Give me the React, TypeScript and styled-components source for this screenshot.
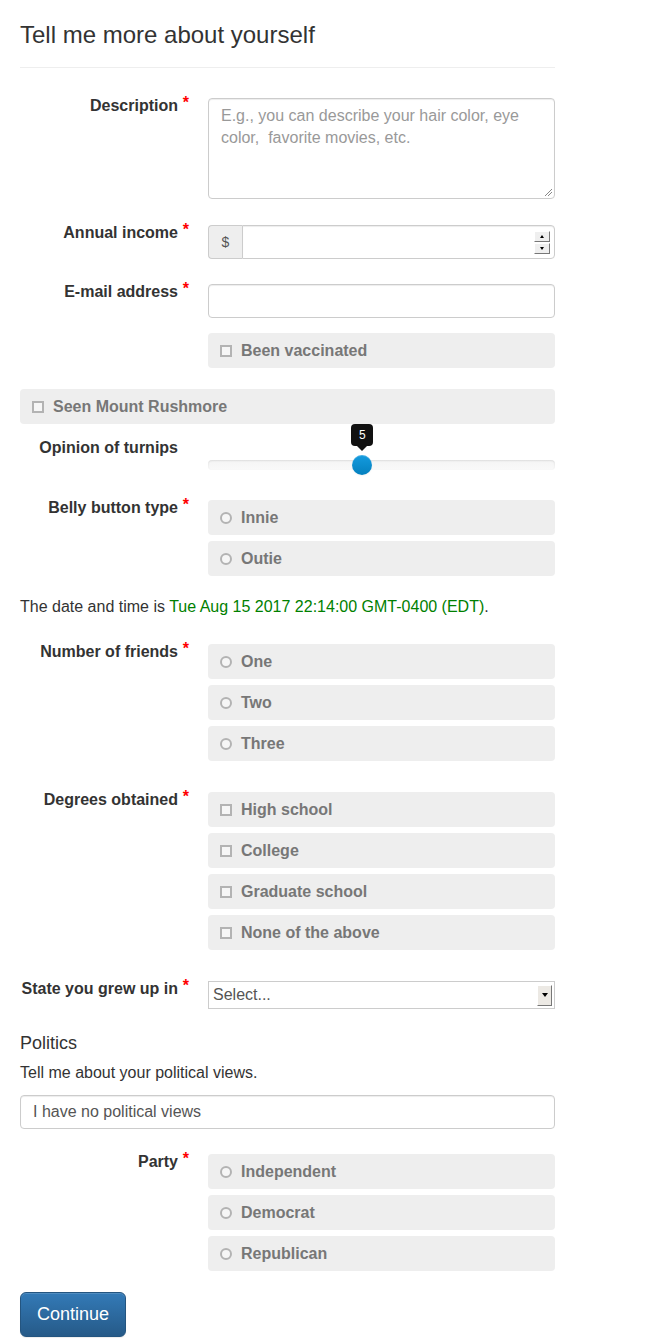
import React from 'react';
import styled, { createGlobalStyle } from 'styled-components';

const GlobalStyle = createGlobalStyle`
  html, body {
    margin: 0;
    padding: 0;
    background: #fff;
  }
  body {
    font-family: "Liberation Sans", Arial, Helvetica, sans-serif;
    font-size: 16px;
    color: #333;
  }
  * {
    box-sizing: border-box;
  }
`;

const Page = styled.div`
  width: 575px;
  padding: 0 20px 4px;
`;

const Title = styled.h1`
  margin: 22px 0 0;
  font-size: 24px;
  font-weight: 400;
  line-height: 26.4px;
  color: #333;
`;

const Rule = styled.hr`
  margin: 19px 0 30px;
  border: 0;
  border-top: 1px solid #eee;
`;

const Row = styled.div<{ $space: number }>`
  display: grid;
  grid-template-columns: 158px 347px;
  column-gap: 30px;
  align-items: start;
  margin-bottom: ${({ $space }) => $space}px;
`;

const Label = styled.label<{ $required?: boolean }>`
  position: relative;
  justify-self: end;
  font-weight: 700;
  font-size: 16px;
  line-height: 16px;
  white-space: nowrap;
  &::after {
    content: ${({ $required }) => ($required ? "'*'" : 'none')};
    position: absolute;
    right: -11px;
    top: -3px;
    color: #f00;
    font-size: 16px;
  }
`;

const SliderLabel = styled(Label)`
  margin-top: 1px;
`;

const TextArea = styled.div`
  height: 101px;
  border: 1px solid #ccc;
  border-radius: 4px;
  padding: 6px 12px;
  line-height: 22px;
  color: #999;
  position: relative;
  box-shadow: inset 0 1px 1px rgba(0, 0, 0, 0.075);
  &::after {
    content: '';
    position: absolute;
    right: 2px;
    bottom: 2px;
    width: 7px;
    height: 7px;
    background: linear-gradient(135deg, transparent 45%, #888 45%, #888 52%, transparent 52%, transparent 70%, #888 70%, #888 77%, transparent 77%);
  }
`;

const InputGroup = styled.div`
  display: flex;
  height: 34px;
`;

const Addon = styled.span`
  width: 34px;
  display: flex;
  align-items: center;
  justify-content: center;
  background: #eee;
  border: 1px solid #ccc;
  border-right: 0;
  border-radius: 4px 0 0 4px;
  color: #555;
  font-size: 14px;
`;

const Field = styled.div<{ $joined?: boolean }>`
  flex: 1;
  display: flex;
  align-items: center;
  height: 34px;
  padding: 0 12px;
  border: 1px solid #ccc;
  border-radius: ${({ $joined }) => ($joined ? '0 4px 4px 0' : '4px')};
  color: #555;
  font-size: 16px;
  box-shadow: inset 0 1px 1px rgba(0, 0, 0, 0.075);
`;

const Spinner = styled.div`
  margin-left: auto;
  margin-right: -8px;
  display: flex;
  flex-direction: column;
  gap: 1px;
`;

const SpinButton = styled.span<{ $down?: boolean }>`
  width: 16px;
  height: 11px;
  display: flex;
  align-items: center;
  justify-content: center;
  background: #efefef;
  border: 1px solid #fff;
  border-right-color: #777;
  border-bottom-color: #777;
  &::before {
    content: '';
    border-left: 2.5px solid transparent;
    border-right: 2.5px solid transparent;
    ${({ $down }) =>
      $down ? 'border-top: 3px solid #000;' : 'border-bottom: 3px solid #000;'}
  }
`;

const Choices = styled.div`
  display: flex;
  flex-direction: column;
  gap: 6px;
`;

const Choice = styled.div`
  height: 35px;
  display: flex;
  align-items: center;
  gap: 9px;
  padding: 0 12px;
  background: #eee;
  border-radius: 4px;
  color: #777;
  font-weight: 700;
  font-size: 16px;
`;

const Mark = styled.span<{ $round?: boolean }>`
  width: 12px;
  height: 12px;
  flex: none;
  border: 2px solid #b3b3b3;
  border-radius: ${({ $round }) => ($round ? '50%' : '0')};
  background: #f6f6f6;
`;

const WideChoice = styled(Choice)`
  margin-bottom: 15px;
`;

const SliderBox = styled.div`
  position: relative;
  height: 46px;
  padding-top: 21px;
`;

const Track = styled.div`
  height: 10px;
  border-radius: 4px;
  background: linear-gradient(to bottom, #f5f5f5, #f9f9f9);
  box-shadow: inset 0 1px 2px rgba(0, 0, 0, 0.1);
`;

const Thumb = styled.div`
  position: absolute;
  top: 16px;
  width: 20px;
  height: 20px;
  margin-left: -10px;
  border-radius: 50%;
  background: linear-gradient(to bottom, #149bdf, #0480be);
  box-shadow: inset 0 1px 0 rgba(255, 255, 255, 0.2), 0 1px 2px rgba(0, 0, 0, 0.05);
`;

const Tip = styled.div`
  position: absolute;
  top: -15px;
  width: 22px;
  height: 22px;
  margin-left: -11px;
  border-radius: 4px;
  background: #111;
  color: #fff;
  font-size: 12px;
  display: flex;
  align-items: center;
  justify-content: center;
  &::after {
    content: '';
    position: absolute;
    left: 6px;
    bottom: -5px;
    border-left: 5px solid transparent;
    border-right: 5px solid transparent;
    border-top: 5px solid #111;
  }
`;

const Note = styled.p<{ $space: number }>`
  margin: 0 0 ${({ $space }) => $space}px;
  line-height: 22px;
  font-size: 16px;
`;

const Green = styled.span`
  color: #008000;
`;

const SelectBox = styled.div`
  height: 28px;
  display: flex;
  align-items: center;
  padding: 0 2px 0 4px;
  border: 1px solid #ccc;
  color: #555;
  font-size: 16px;
`;

const DropButton = styled.span`
  margin-left: auto;
  width: 15px;
  height: 21px;
  display: flex;
  align-items: center;
  justify-content: center;
  background: #ece9e4;
  border: 1px solid #fff;
  border-right-color: #777;
  border-bottom-color: #777;
  &::before {
    content: '';
    border-left: 3px solid transparent;
    border-right: 3px solid transparent;
    border-top: 4px solid #000;
  }
`;

const SubHead = styled.h4`
  margin: 0 0 9px;
  font-size: 18px;
  font-weight: 400;
  line-height: 20px;
`;

const WideField = styled(Field)`
  margin-bottom: 25px;
`;

const Button = styled.button`
  font-family: inherit;
  font-size: 18px;
  line-height: 23px;
  padding: 10px 16px;
  color: #fff;
  border: 1px solid #245580;
  border-radius: 6px;
  background: linear-gradient(to bottom, #337ab7 0%, #265a88 100%);
  box-shadow: inset 0 1px 0 rgba(255, 255, 255, 0.15), 0 1px 1px rgba(0, 0, 0, 0.075);
`;

const ChoiceList = ({ items, round }: { items: string[]; round?: boolean }) => (
  <Choices>
    {items.map((item) => (
      <Choice key={item}>
        <Mark $round={round} />
        {item}
      </Choice>
    ))}
  </Choices>
);

export default function App() {
  const turnips = 5;
  const pos = ((turnips - 1) / 9) * 100;

  return (
    <Page>
      <GlobalStyle />
      <Title>Tell me more about yourself</Title>
      <Rule />

      <Row $space={26}>
        <Label $required>Description</Label>
        <TextArea>
          E.g., you can describe your hair color, eye color,&nbsp; favorite movies, etc.
        </TextArea>
      </Row>

      <Row $space={25}>
        <Label $required>Annual income</Label>
        <InputGroup>
          <Addon>$</Addon>
          <Field $joined>
            <Spinner>
              <SpinButton />
              <SpinButton $down />
            </Spinner>
          </Field>
        </InputGroup>
      </Row>

      <Row $space={15}>
        <Label $required>E-mail address</Label>
        <Field />
      </Row>

      <Row $space={21}>
        <span />
        <Choice>
          <Mark />
          Been vaccinated
        </Choice>
      </Row>

      <WideChoice>
        <Mark />
        Seen Mount Rushmore
      </WideChoice>

      <Row $space={15}>
        <SliderLabel>Opinion of turnips</SliderLabel>
        <SliderBox>
          <Tip style={{ left: `${pos}%` }}>{turnips}</Tip>
          <Track />
          <Thumb style={{ left: `${pos}%` }} />
        </SliderBox>
      </Row>

      <Row $space={20}>
        <Label $required>Belly button type</Label>
        <ChoiceList round items={['Innie', 'Outie']} />
      </Row>

      <Note $space={26}>
        The date and time is <Green>Tue Aug 15 2017 22:14:00 GMT-0400 (EDT)</Green>.
      </Note>

      <Row $space={31}>
        <Label $required>Number of friends</Label>
        <ChoiceList round items={['One', 'Two', 'Three']} />
      </Row>

      <Row $space={31}>
        <Label $required>Degrees obtained</Label>
        <ChoiceList items={['High school', 'College', 'Graduate school', 'None of the above']} />
      </Row>

      <Row $space={24}>
        <Label $required>State you grew up in</Label>
        <SelectBox>
          Select...
          <DropButton />
        </SelectBox>
      </Row>

      <SubHead>Politics</SubHead>
      <Note $space={11}>Tell me about your political views.</Note>
      <WideField>I have no political views</WideField>

      <Row $space={21}>
        <Label $required>Party</Label>
        <ChoiceList round items={['Independent', 'Democrat', 'Republican']} />
      </Row>

      <Button type="button">Continue</Button>
    </Page>
  );
}
